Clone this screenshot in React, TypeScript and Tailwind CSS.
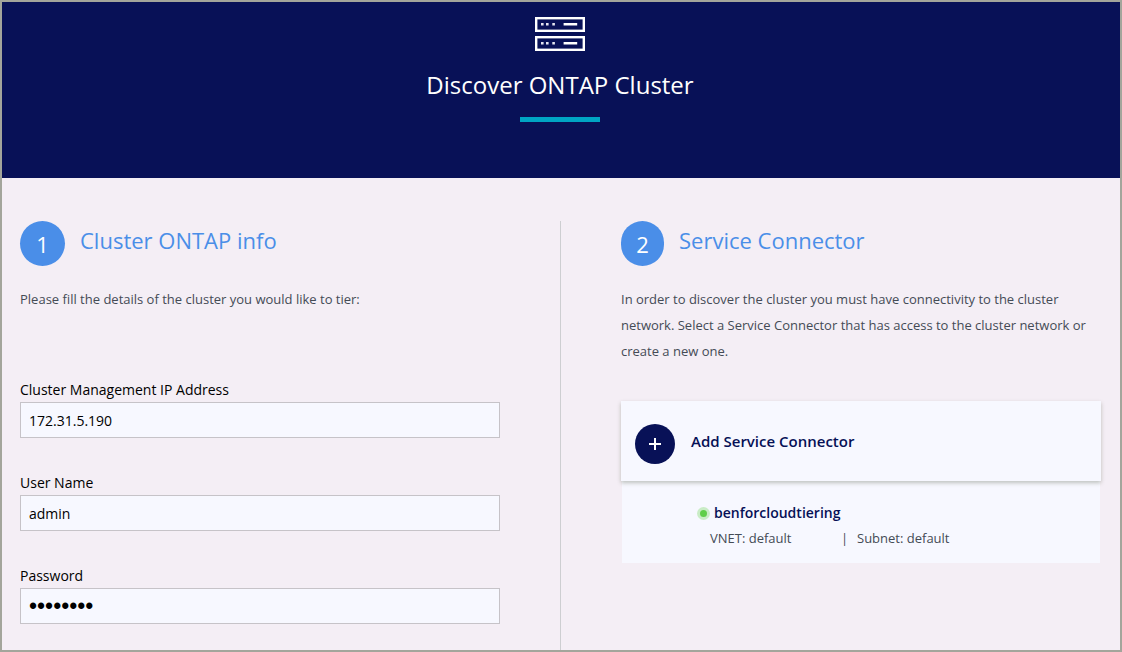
import type { ReactNode } from "react";

function ServerIcon() {
  return (
    <svg width="50" height="34" viewBox="0 0 50 34" fill="none" aria-hidden="true">
      {[0, 19].map((y) => (
        <g key={y} transform={`translate(0 ${y})`}>
          <rect x="1.200" y="1.200" width="47.600" height="12.600" stroke="#fff" strokeWidth="2.400" />
          <path d="M6 6h2.600v2.600h-2.600zM11 6h2.600v2.600h-2.600zM17.300 6h2.600v2.600h-2.600z" fill="#e4e5f0" />
          <path d="M28.600 6h13.600v2.500h-13.600z" fill="#fff" />
        </g>
      ))}
    </svg>
  );
}

type StepHeadingProps = { step: number; badgeWidth: string; children: ReactNode };

function StepHeading({ step, badgeWidth, children }: StepHeadingProps) {
  return (
    <div className="flex gap-[15px]">
      <span
        className={`flex h-[45px] shrink-0 items-center justify-center rounded-full bg-[#4a8ee8] text-[22px] leading-none text-white ${badgeWidth}`}
      >
        {step}
      </span>
      <h2 className="text-[22px] leading-[38px] text-[#4a8ee8]">{children}</h2>
    </div>
  );
}

type FieldProps = { id: string; label: string; type?: string; value: string };

function Field({ id, label, type = "text", value }: FieldProps) {
  const font = type === "password" ? "font-['Liberation_Sans',sans-serif] text-[23px]" : "text-sm";
  return (
    <div>
      <label htmlFor={id} className="block text-sm leading-6 text-black">
        {label}
      </label>
      <input
        id={id}
        type={type}
        defaultValue={value}
        className={`block h-9 w-full border border-[#c6c3c8] bg-[#f7f8ff] px-2 text-black outline-none ${font}`}
      />
    </div>
  );
}

export default function App() {
  return (
    <div className="flex min-h-screen flex-col border-2 border-[#a3a59b] bg-[#f4eef5] font-['Open_Sans',sans-serif]">
      <header className="flex h-44 flex-col items-center bg-[#081157] pt-[15px] pr-0.5">
        <ServerIcon />
        <h1 className="mt-[18px] text-2xl leading-8 text-white">Discover ONTAP Cluster</h1>
        <div className="mt-4 h-[5px] w-20 bg-[#00a5c4]" />
      </header>

      <main className="grid grow grid-cols-2 px-[18px] pt-[43px]">
        <section className="border-r border-[#cdced1] pr-[60px] pb-6">
          <StepHeading step={1} badgeWidth="w-[45px]">
            Cluster ONTAP info
          </StepHeading>
          <p className="mt-5 text-[13px] leading-[26px] text-[#444b55]">
            Please fill the details of the cluster you would like to tier:
          </p>
          <form className="mt-[66px] flex flex-col gap-[33px]">
            <Field id="ip" label="Cluster Management IP Address" value="172.31.5.190" />
            <Field id="user" label="User Name" value="admin" />
            <Field id="password" label="Password" type="password" value="password" />
          </form>
        </section>

        <section className="pr-px pl-[60px]">
          <StepHeading step={2} badgeWidth="w-[43px]">
            Service Connector
          </StepHeading>
          <p className="mt-5 text-[13px] leading-[26px] text-[#444b55]">
            In order to discover the cluster you must have connectivity to the cluster network. Select a Service
            Connector that has access to the cluster network or create a new one.
          </p>
          <button
            type="button"
            className="relative mt-[37px] flex h-20 w-full items-center gap-4 bg-[#f7f8ff] px-[14px] text-left shadow-[0_2px_4px_rgba(60,70,40,0.3)]"
          >
            <span className="mt-1.5 flex size-10 items-center justify-center rounded-full bg-[#081157]">
              <svg width="12" height="12" viewBox="0 0 12 12" aria-hidden="true">
                <path d="M6 0v12M0 6h12" stroke="#fff" strokeWidth="2" />
              </svg>
            </span>
            <span className="text-[15px] font-semibold text-[#061056]">Add Service Connector</span>
          </button>
          <div className="mx-px bg-[#f7f8ff] pt-5 pb-3 pl-[75px]">
            <div className="flex items-center gap-1">
              <span className="flex size-[13px] items-center justify-center rounded-full bg-[#c9ecc6]">
                <span className="size-[7px] rounded-full bg-[#5fce49]" />
              </span>
              <span className="text-sm leading-6 font-semibold text-[#061056]">benforcloudtiering</span>
            </div>
            <div className="flex pl-[13px] text-[13px] leading-[26px] text-[#444b55]">
              <span className="w-[131px]">VNET: default</span>
              <span className="w-4">|</span>
              <span>Subnet: default</span>
            </div>
          </div>
        </section>
      </main>
    </div>
  );
}
